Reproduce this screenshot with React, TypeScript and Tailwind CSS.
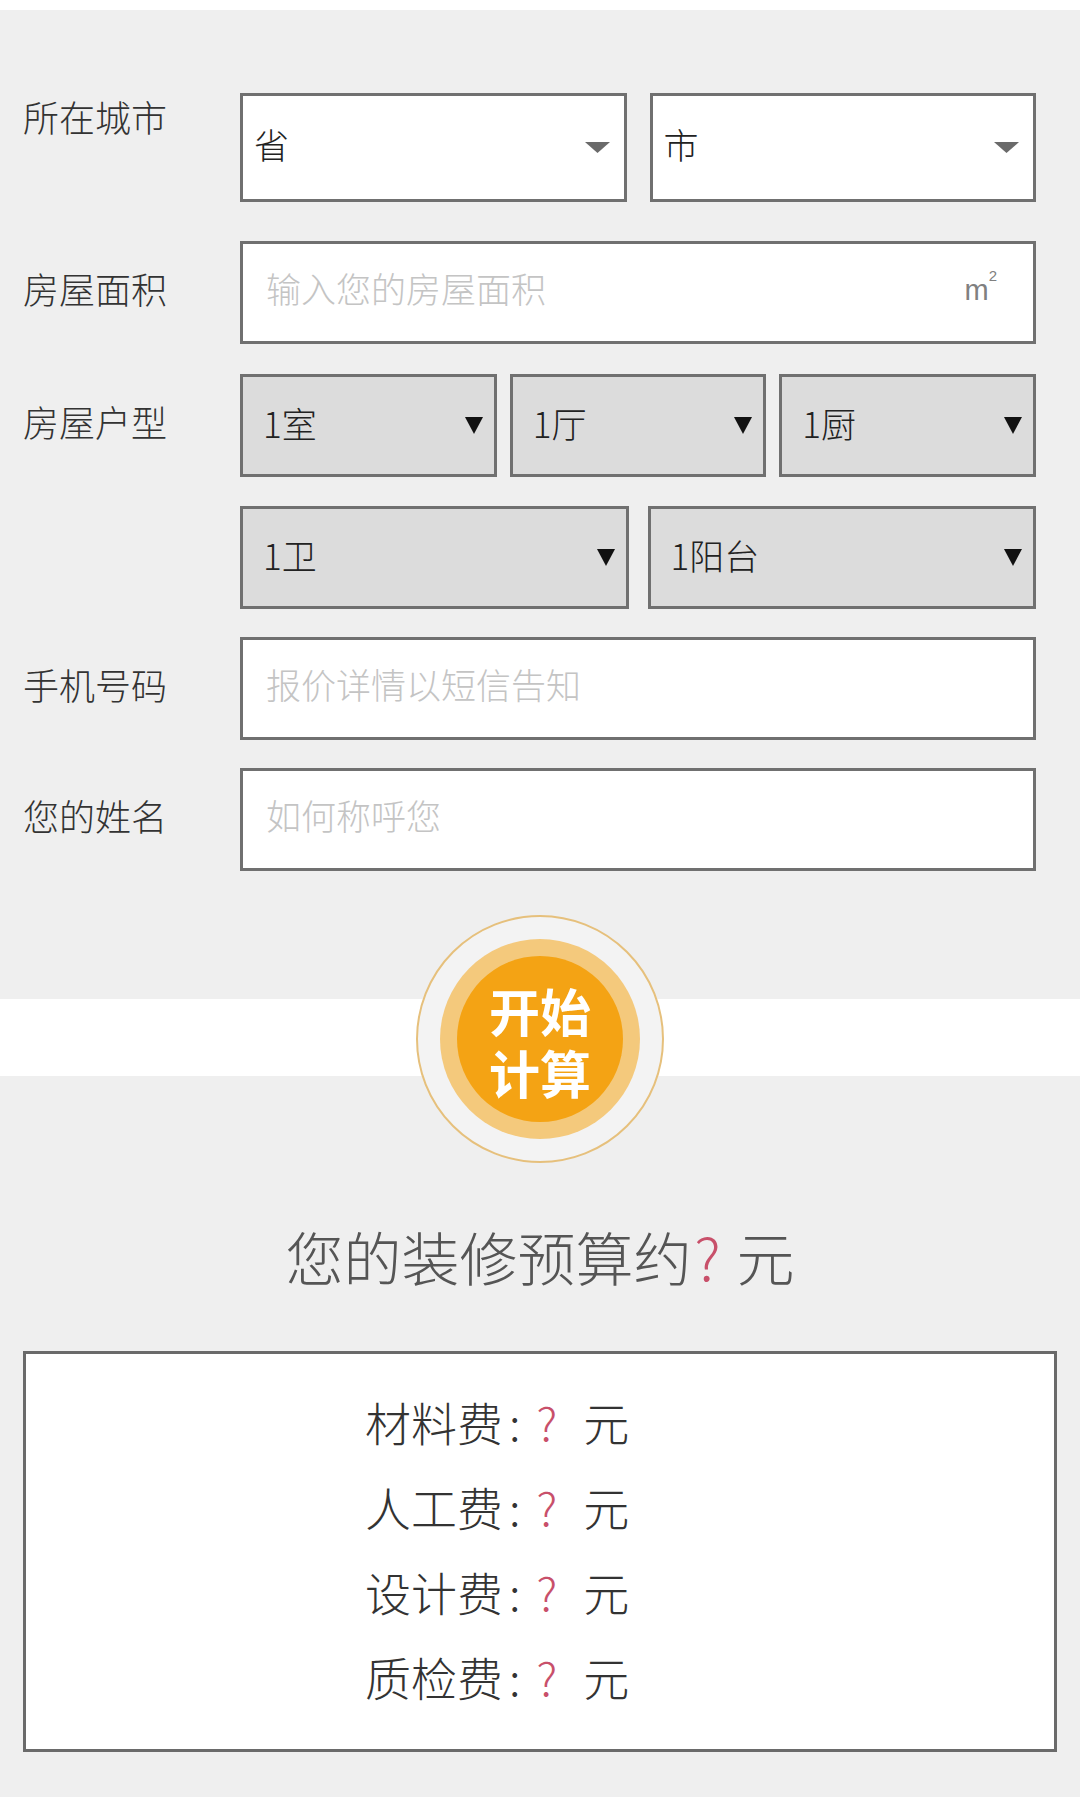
import type { ReactNode } from 'react';

const FONT = "font-['Noto_Sans_CJK_SC','Noto_Sans',sans-serif]";

function GrayCaret() {
  return (
    <svg width="25" height="11" viewBox="0 0 25 11" className="shrink-0">
      <polygon points="0,0 25,0 12.5,11" fill="#6a6a6a" />
    </svg>
  );
}

function BlackCaret() {
  return (
    <svg width="20" height="17" viewBox="0 0 20 17" className="shrink-0">
      <polygon points="1,0 19,0 10,17" fill="#111" />
    </svg>
  );
}

function Row({ label, labelClass = '', children }: { label: string; labelClass?: string; children: ReactNode }) {
  return (
    <div className="flex">
      <div className={`w-[217px] shrink-0 text-[36px] font-light text-[#333] flex ${labelClass || 'items-center pb-[10px]'}`}>
        {label}
      </div>
      <div className="flex-1">{children}</div>
    </div>
  );
}

function CityBox({ text }: { text: string }) {
  return (
    <div className="flex-1 h-[109px] bg-white border-[3px] border-[#707070] flex items-center justify-between pl-[11px] pr-[14px]">
      <span className="text-[35px] font-light text-[#222] pb-[8px]">{text}</span>
      <GrayCaret />
    </div>
  );
}

function SelectBox({ text }: { text: string }) {
  return (
    <div className="h-[103px] bg-[#dcdcdc] border-[3px] border-[#707070] flex items-center justify-between pl-[20px] pr-[10px]">
      <span className="text-[35px] font-light text-[#222] pb-[6px]">{text}</span>
      <BlackCaret />
    </div>
  );
}

function TextBox({ placeholder, children }: { placeholder: string; children?: ReactNode }) {
  return (
    <div className="h-[103px] bg-white border-[3px] border-[#707070] flex items-center justify-between pl-[23px] pr-[36px]">
      <span className="text-[35px] font-light text-[#c4c4c4] pb-[10px]">{placeholder}</span>
      {children}
    </div>
  );
}

function FeeLine({ name }: { name: string }) {
  return (
    <div className="h-[85px] flex items-center text-[46px] font-light text-[#333]">
      <span>{name}</span>
      <span className="ml-[6px]">:</span>
      <span className="ml-[16px] text-[#c8506a]">?</span>
      <span className="ml-[26px]">元</span>
    </div>
  );
}

export default function App() {
  return (
    <div className={`${FONT} w-[1080px] min-h-[1797px] bg-[#efefef] leading-none`}>
      <div className="h-[10px] bg-white" />

      <div className="pl-[23px] pr-[44px] pt-[83px] flex flex-col">
        <Row label="所在城市" labelClass="items-start pt-[5px]">
          <div className="flex gap-[23px]">
            <CityBox text="省" />
            <CityBox text="市" />
          </div>
        </Row>

        <div className="mt-[39px]">
          <Row label="房屋面积">
            <TextBox placeholder="输入您的房屋面积">
              <span className="flex items-start pb-[12px] text-[#808080] font-['Liberation_Sans',sans-serif]">
                <span className="text-[29px] leading-[29px] pt-[8px]">m</span>
                <span className="text-[15px] leading-[15px]">2</span>
              </span>
            </TextBox>
          </Row>
        </div>

        <div className="mt-[30px]">
          <Row label="房屋户型">
            <div className="grid grid-cols-3 gap-[13px]">
              <SelectBox text="1室" />
              <SelectBox text="1厅" />
              <SelectBox text="1厨" />
            </div>
          </Row>
        </div>

        <div className="mt-[29px]">
          <Row label="">
            <div className="grid grid-cols-2 gap-[19px]">
              <SelectBox text="1卫" />
              <SelectBox text="1阳台" />
            </div>
          </Row>
        </div>

        <div className="mt-[28px]">
          <Row label="手机号码">
            <TextBox placeholder="报价详情以短信告知" />
          </Row>
        </div>

        <div className="mt-[28px]">
          <Row label="您的姓名">
            <TextBox placeholder="如何称呼您" />
          </Row>
        </div>
      </div>

      <div className="mt-[44px] h-[248px] flex justify-center bg-[linear-gradient(to_bottom,transparent_84px,#ffffff_84px,#ffffff_161px,transparent_161px)]">
        <button
          type="button"
          className="w-[248px] h-[248px] rounded-full border-2 border-[#e6c07c] bg-[#f3f3f3] flex items-center justify-center"
        >
          <div className="w-[200px] h-[200px] rounded-full bg-[#f4c97c] flex items-center justify-center">
            <div className="w-[166px] h-[166px] rounded-full bg-[#f4a314] flex items-center justify-center text-center text-white font-bold text-[51px] leading-[62px] pt-[4px]">
              开始
              <br />
              计算
            </div>
          </div>
        </button>
      </div>

      <div className="mt-[60px] text-center text-[58px] leading-[67px] font-light text-[#555]">
        您的装修预算约<span className="text-[#c8506a] mx-[3px]">?</span> 元
      </div>

      <div className="mt-[61px] mx-[23px] h-[401px] bg-white border-[3px] border-[#6a6a6a] pl-[339px] pt-[24px]">
        <FeeLine name="材料费" />
        <FeeLine name="人工费" />
        <FeeLine name="设计费" />
        <FeeLine name="质检费" />
      </div>
    </div>
  );
}
